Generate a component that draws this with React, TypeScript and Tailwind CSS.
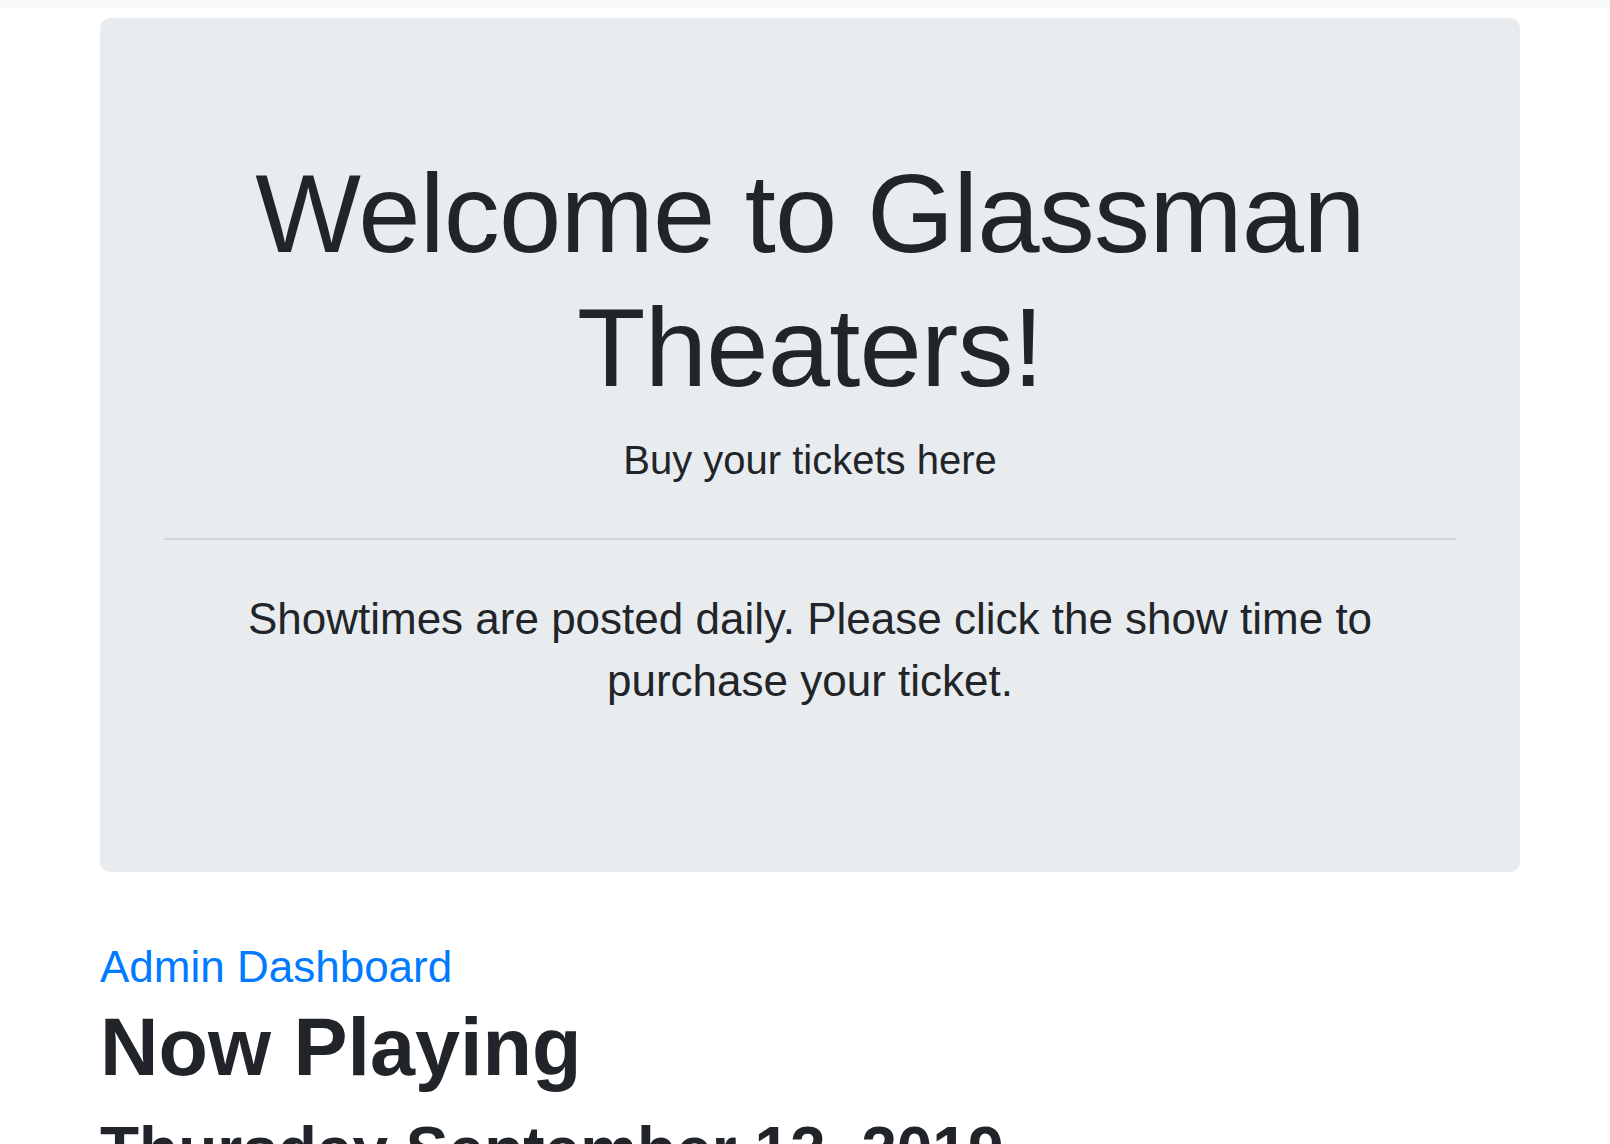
export default function App() {
  const sans = { fontFamily: '"Liberation Sans", Arial, sans-serif' };

  return (
    <div className="min-h-screen w-full bg-white text-[#212529]" style={sans}>
      <div className="h-[8px] w-full bg-[#f8f9fa]"></div>

      <main className="ml-[100px] w-[1420px] pt-[10px]">
        <section className="rounded-[10px] bg-[#e9ecef] px-[64px] pt-[129px] pb-[160px] text-center">
          <h1 className="text-[112px] font-light leading-[1.2] tracking-[-0.8px] mb-[14px]">
            Welcome to Glassman Theaters!
          </h1>
          <p className="text-[40px] font-light leading-[1.5]">
            Buy your tickets here
          </p>
          <hr className="mt-[48px] mb-[48px] border-0 border-t-2 border-[#d3d6d9]" />
          <p className="text-[44px] leading-[62px]">
            Showtimes are posted daily. Please click the show time to purchase
            your ticket.
          </p>
        </section>

        <div className="mt-[64px]">
          <a href="#" className="block text-[44px] leading-[62px] text-[#007bff]">
            Admin Dashboard
          </a>
          <h1 className="mt-[1px] text-[81px] font-bold leading-[1.2] mb-[16px]">
            Now Playing
          </h1>
          <h2 className="text-[64px] font-bold leading-[1.2]">
            Thursday September 12, 2019
          </h2>
        </div>
      </main>
    </div>
  );
}
